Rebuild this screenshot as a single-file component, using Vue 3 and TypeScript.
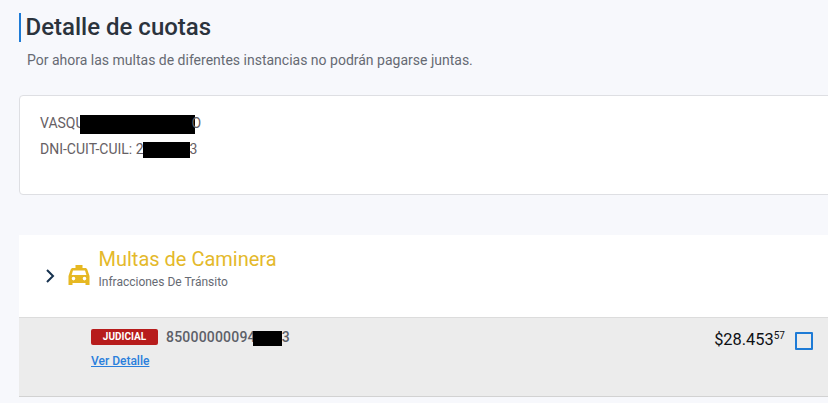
<script setup lang="ts">
const title = 'Detalle de cuotas'
</script>

<template>
  <main class="page">
    <h1 class="title">{{ title }}</h1>
    <p class="note">Por ahora las multas de diferentes instancias no podrán pagarse juntas.</p>
    <section class="person">
      <div class="person-line">VASQU<span class="redact name"></span>O</div>
      <div class="person-line">DNI-CUIT-CUIL: 2<span class="redact doc"></span>3</div>
    </section>
    <section class="group">
      <header class="group-head">
        <svg class="chevron" viewBox="0 0 10 16" width="10" height="16">
          <path d="M2 2l6 6-6 6" fill="none" stroke="#16324f" stroke-width="2" />
        </svg>
        <svg class="taxi" viewBox="0 0 22 20" width="22" height="20">
          <path fill="#e6b822" fill-rule="evenodd" d="M7.5 0h7v3h2.700c1 0 1.800.6 2.100 1.500L21.500 11v9h-4v-2h-13v2h-4v-9l2.200-6.500C3 3.600 3.800 3 4.800 3h2.700zM5 5.500L3.600 10h14.800L17 5.500zM5.500 11.800a1.800 1.800 0 1 0 0 3.600 1.800 1.800 0 0 0 0-3.600zm11 0a1.800 1.800 0 1 0 0 3.600 1.800 1.800 0 0 0 0-3.600z" />
        </svg>
        <div class="group-text">
          <div class="group-title">Multas de Caminera</div>
          <div class="group-sub">Infracciones De Tránsito</div>
        </div>
      </header>
      <div class="row">
        <div class="row-main">
          <div class="row-top">
            <span class="badge">JUDICIAL</span>
            <span class="number">85000000094<span class="redact num"></span>3</span>
          </div>
          <a class="link" href="#">Ver Detalle</a>
        </div>
        <div class="amount">$28.453<sup>57</sup></div>
        <span class="check"></span>
      </div>
    </section>
  </main>
</template>

<style>
html, body { margin: 0; background: #f7f8fc; overflow: hidden; }
</style>

<style scoped>
.page {
  width: 860px;
  height: 403px;
  box-sizing: border-box;
  padding: 13px 0 0 19px;
  font-family: Roboto, "Liberation Sans", sans-serif;
  overflow: hidden;
}
.title {
  margin: 0;
  height: 29px;
  line-height: 29px;
  padding-left: 4.5px;
  border-left: 2px solid #1e7bd6;
  font-size: 24px;
  font-weight: 500;
  color: #2b333d;
}
.note {
  margin: 10px 0 0 8px;
  font-size: 14px;
  line-height: 16px;
  color: #666a73;
}
.person {
  margin-top: 27px;
  height: 100px;
  box-sizing: border-box;
  padding: 14px 20px;
  background: #fff;
  border: 1px solid #dedfe3;
  border-radius: 4px;
  font-size: 14px;
  color: #666064;
}
.person-line {
  height: 26px;
  line-height: 26px;
  white-space: nowrap;
}
.redact {
  display: inline-block;
  background: #000;
  vertical-align: middle;
}
.name { width: 115px; height: 19px; margin-left: -5px; margin-right: -3px; }
.doc { width: 47px; height: 16px; margin-left: -1px; }
.num { width: 29px; height: 15px; margin-left: -3px; }
.group { margin-top: 40px; }
.group-head {
  height: 82px;
  box-sizing: border-box;
  background: #fff;
  display: flex;
  align-items: flex-start;
  padding: 12px 0 0 26px;
}
.chevron { margin-top: 21px; }
.taxi { margin: 18px 0 0 13px; }
.group-text { margin-left: 8.5px; }
.group-title {
  font-size: 20px;
  line-height: 24px;
  color: #e4b92b;
}
.group-sub {
  margin-top: 4px;
  font-size: 12px;
  line-height: 14px;
  color: #666a73;
}
.row {
  height: 80px;
  box-sizing: border-box;
  background: #ececec;
  border-top: 1px solid #dcdcdc;
  border-bottom: 1px solid #d2d2d2;
  display: flex;
  align-items: flex-start;
  padding: 11px 15px 0 72px;
  width: 809px;
}
.row-main { flex: 1; }
.row-top { display: flex; align-items: center; }
.badge {
  width: 67px;
  height: 16px;
  line-height: 16px;
  text-align: center;
  background: #b71c1c;
  border-radius: 2px;
  color: #fff;
  font-size: 10px;
  font-weight: 700;
}
.number {
  margin-left: 8px;
  font-size: 14px;
  font-weight: 500;
  letter-spacing: 0.2px;
  color: #5d6068;
  white-space: nowrap;
}
.link {
  display: inline-block;
  margin-top: 8px;
  font-size: 12px;
  line-height: 14px;
  font-weight: 500;
  color: #2a7fdc;
}
.amount {
  font-size: 16.4px;
  font-weight: 400;
  line-height: 20px;
  margin-top: 1px;
  color: #0e1014;
  white-space: nowrap;
}
.amount sup {
  font-size: 10px;
  font-weight: 400;
  line-height: 0;
  vertical-align: 6px;
}
.check {
  width: 14px;
  height: 14px;
  margin: 3px 0 0 10px;
  border: 2px solid #1e7bd6;
  border-radius: 1px;
}
</style>
